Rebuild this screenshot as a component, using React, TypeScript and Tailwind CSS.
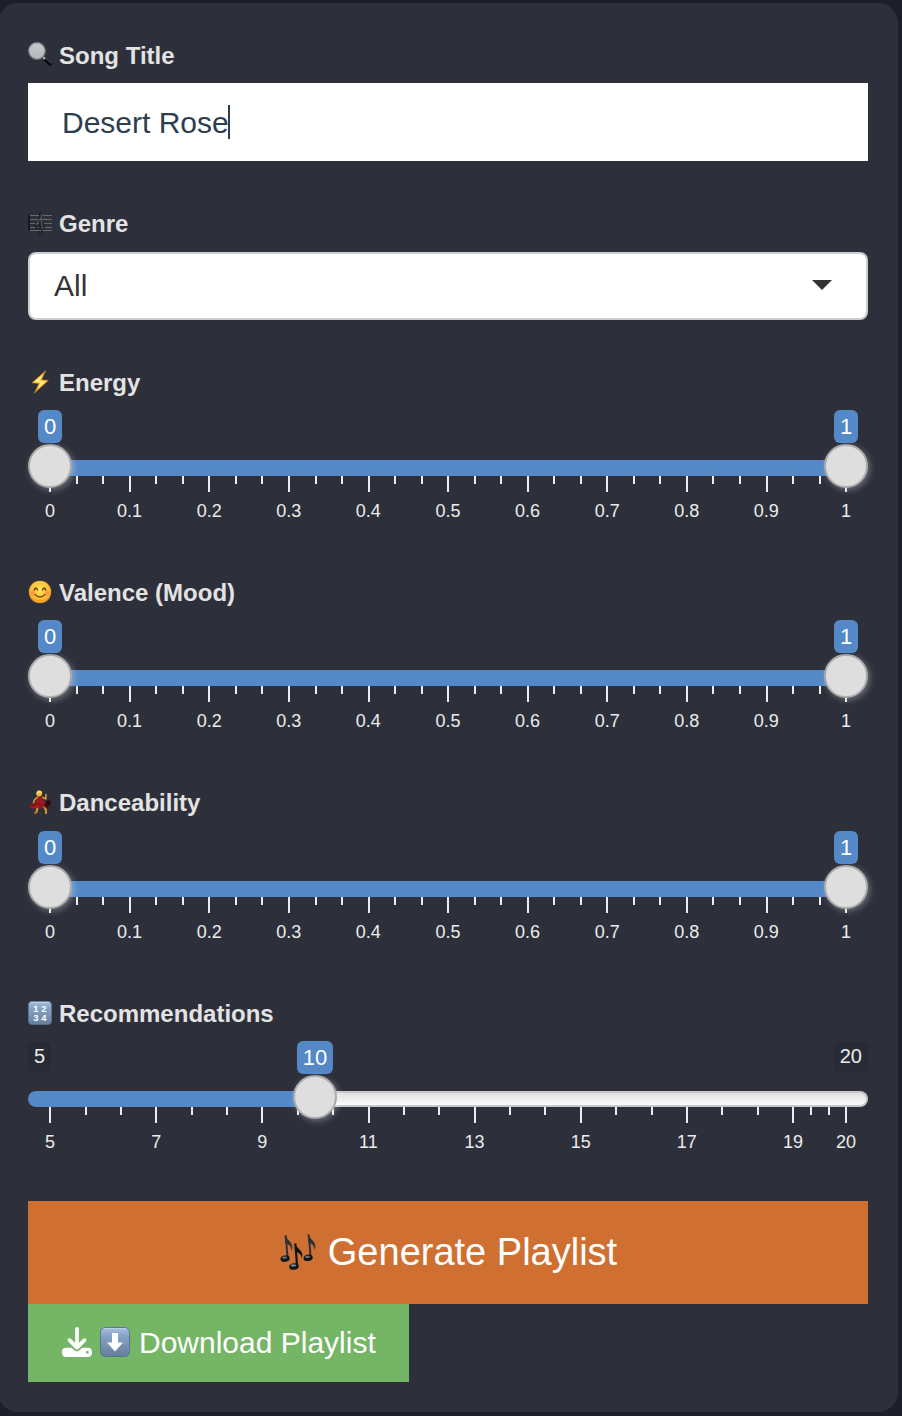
import type { ReactNode } from "react";
import { FaDownload } from "react-icons/fa6";

function SearchEmoji() {
  return (
    <svg viewBox="0 0 24 24" className="size-6">
      <defs>
        <linearGradient id="lens" x1="0" y1="0" x2="0" y2="1">
          <stop offset="0" stopColor="#c8cacd" />
          <stop offset="1" stopColor="#b4b7ba" />
        </linearGradient>
      </defs>
      <path d="M17 17 L22 22" stroke="#08090a" strokeWidth="3.6" strokeLinecap="round" />
      <path d="M17.800 16.200 L22.800 21" stroke="#6d6f72" strokeWidth="0.9" strokeLinecap="round" />
      <path d="M14 14 L17 17" stroke="#c8c9cb" strokeWidth="2" />
      <circle cx="9" cy="9" r="8.400" fill="url(#lens)" stroke="#666a71" strokeWidth="1.300" />
      <path d="M1 9 A8 8 0 0 1 14.6 3.3" fill="none" stroke="#a3a8ae" strokeWidth="0.8" />
    </svg>
  );
}

function ScoreEmoji() {
  return (
    <svg viewBox="0 0 24 24" className="size-6" fill="none">
      <path d="M1 4.500h23M1 8.500h23M1 12.500h23M1 16.500h23M1 19.500h23" stroke="#666970" strokeWidth="1" />
      <path d="M1.100 3.500v16.600" stroke="#121418" strokeWidth="1.600" />
      <path
        d="M14 19.500c.300 2.300-.800 3.500-2.200 3.500-2 0-2.400-2.400-.7-2.300M14 19.500L11.900 6c-.400-3 .6-4.800 1.500-5 1 2 .6 4.300-1.300 6.500-2.400 2.600-4.700 4.200-4.500 7.300.2 3.500 5 4.300 7.600 2.200 2-2 .5-5-2-4.800-2.600.2-3.200 2.800-1.300 4"
        stroke="#222429"
        strokeWidth="1.700"
        strokeLinecap="round"
      />
      <path d="M12.700 7l1.800 11M13.900 2.500q.4 2-1 4.500-4 3.500-4.400 7" stroke="#85888d" strokeWidth="0.600" />
    </svg>
  );
}

function BoltEmoji() {
  return (
    <svg viewBox="0 0 24 24" className="size-6">
      <defs>
        <linearGradient id="bolt" x1="0" y1="0" x2="0" y2="1">
          <stop offset="0" stopColor="#f6a623" />
          <stop offset="0.5" stopColor="#ffd34f" />
          <stop offset="1" stopColor="#f49b19" />
        </linearGradient>
      </defs>
      <path d="M17.800.6 4 12.800l7 .700L6.200 23.300 20.300 10.600l-6.800-.900z" fill="url(#bolt)" stroke="#c77a1b" strokeWidth="0.600" strokeLinejoin="round" />
      <path d="M14.800 4.200 7 11.600l5.800.700L9.500 19l7.500-7.200-5.600-.700z" fill="#fff08c" />
    </svg>
  );
}

function SmileEmoji() {
  return (
    <svg viewBox="0 0 24 24" className="size-6">
      <defs>
        <radialGradient id="face" cx="0.5" cy="0.42" r="0.6">
          <stop offset="0" stopColor="#ffe35b" />
          <stop offset="0.6" stopColor="#fdc63c" />
          <stop offset="1" stopColor="#ed8d1d" />
        </radialGradient>
        <radialGradient id="cheek">
          <stop offset="0" stopColor="#f77f3a" stopOpacity="0.8" />
          <stop offset="1" stopColor="#f77f3a" stopOpacity="0" />
        </radialGradient>
      </defs>
      <circle cx="12" cy="12" r="11.200" fill="url(#face)" />
      <circle cx="5" cy="13" r="4" fill="url(#cheek)" />
      <circle cx="19" cy="13" r="4" fill="url(#cheek)" />
      <path d="M6.200 10q1.600-4 3.200 0M14.600 10q1.600-4 3.200 0" fill="none" stroke="#714009" strokeWidth="1.500" strokeLinecap="round" />
      <path d="M7 14.500q5 5 10 0" fill="none" stroke="#814809" strokeWidth="1.300" strokeLinecap="round" />
    </svg>
  );
}

function DancerEmoji() {
  return (
    <svg viewBox="0 0 24 24" className="size-6" strokeLinecap="round" strokeLinejoin="round">
      <path d="M10 16l-1.500 6M15.500 16l2.500 4v3" stroke="#d99a35" strokeWidth="2" fill="none" />
      <path d="M8 22.600l-1.200.600M18 22.600v.800" stroke="#c98a35" strokeWidth="1.300" />
      <path d="M9.500 6.500l5.300.300.4 4.700 4.800.5 2.500 2-4.400 3.700-3.600-1.200-2.300 2.500-3.400-1.600-3.600 1.400L.8 16.500l1-1.500L7.500 13z" fill="#a2181d" />
      <path d="M18 11q3-2 5 .8.8 2.200-4 6l-2.500-2z" fill="#2f0b10" />
      <path d="M2 15l5 .5 3-2.500 3 2 4-1" stroke="#621018" strokeWidth="0.900" fill="none" />
      <path d="M9.500 7l-3 2.800-1 2.700M14.800 7.300l3 1.700.2-4.500" stroke="#dda03c" strokeWidth="1.500" fill="none" />
      <circle cx="11.300" cy="3.600" r="2.800" fill="#edb43e" />
      <path d="M8.500 5Q8 .500 11.500.6q3 .4 2.500 3.200l-2-1.300z" fill="#ffd75a" />
    </svg>
  );
}

function TileDefs({ id }: { id: string }) {
  return (
    <defs>
      <linearGradient id={id} x1="0" y1="0" x2="0" y2="1">
        <stop offset="0" stopColor="#a5bfdf" />
        <stop offset="0.3" stopColor="#86a3c4" />
        <stop offset="1" stopColor="#667e9c" />
      </linearGradient>
    </defs>
  );
}

function NumbersEmoji() {
  return (
    <svg viewBox="0 0 24 24" className="size-6">
      <TileDefs id="numbers-tile" />
      <rect x="0.400" y="0.400" width="23.200" height="23.200" rx="4" fill="url(#numbers-tile)" stroke="#5e7796" strokeWidth="0.700" />
      <path d="M3 1.400h18" stroke="#c8dbf1" strokeWidth="0.800" strokeLinecap="round" />
      <g fill="#fff" fontFamily="Liberation Sans, sans-serif" fontWeight="700" fontSize="9.500" textAnchor="middle">
        <text x="8" y="10.500">1</text>
        <text x="16" y="10.500">2</text>
        <text x="8" y="19.700">3</text>
        <text x="16" y="19.700">4</text>
      </g>
    </svg>
  );
}

function DownArrowEmoji() {
  return (
    <svg viewBox="0 0 30 30" className="size-[30px]">
      <TileDefs id="arrow-tile" />
      <rect x="0.500" y="0.500" width="29" height="29" rx="5" fill="url(#arrow-tile)" stroke="#556f91" strokeWidth="0.900" />
      <path d="M4 1.600h22" stroke="#bdd3ee" strokeWidth="0.900" strokeLinecap="round" />
      <path d="M12 6h6v9.500h5L15 24.500 7 15.500h5z" fill="#fff" />
    </svg>
  );
}

function Note({ x, y }: { x: number; y: number }) {
  return (
    <g transform={`translate(${x} ${y})`}>
      <path d="M4.500 0.500C5.500 5 14 8 11 15.500c0-4.500-3-6-5.600-7.300z" fill="#2b3034" stroke="#43403d" strokeWidth="0.600" />
      <path d="M5.200 0.500L7.200 23.500" stroke="#2b3033" strokeWidth="1.900" />
      <ellipse cx="4.600" cy="23.800" rx="4.600" ry="3.200" fill="#111619" transform="rotate(-8 4.600 23.800)" />
      <ellipse cx="4" cy="22.900" rx="2.600" ry="1.100" fill="#65717a" />
    </g>
  );
}

function NotesEmoji() {
  return (
    <svg viewBox="0 0 38 38" className="size-[38px]">
      <Note x={1.5} y={0.8} />
      <Note x={24.500} y={0} />
      <g transform="translate(10 9)">
        <path d="M5.800 0.500C6.500 5 16 7.500 12.700 15.500c0-4.500-3.500-6-6.400-7.300z" fill="#0d1012" />
        <path d="M6.300 0.500L8.100 23" stroke="#111416" strokeWidth="2.200" />
        <ellipse cx="5" cy="23.500" rx="4.800" ry="3.300" fill="#111619" transform="rotate(-6 5 23.500)" />
        <ellipse cx="4.300" cy="22.400" rx="2.800" ry="1.200" fill="#7a858c" />
      </g>
    </svg>
  );
}

function Label({ icon, children }: { icon: ReactNode; children: ReactNode }) {
  return (
    <div className="flex h-6 items-center gap-[7px] text-[24px] leading-6 font-bold text-[#e3e3e3]">
      {icon}
      <span className="relative top-px">{children}</span>
    </div>
  );
}

function Ticks({ segments, className }: { segments: number; className: string }) {
  const count = segments * 3 + 1;
  return (
    <div className={`flex items-start justify-between ${className}`}>
      {Array.from({ length: count }, (_, i) => (
        <i key={i} className={i % 3 === 0 ? "h-4 w-0.5 bg-[#ececec]" : "h-2 w-0.5 bg-[#ececec]"} />
      ))}
    </div>
  );
}

function Numbers({ values, className }: { values: string[]; className: string }) {
  return (
    <div className={`flex justify-between ${className}`}>
      {values.map((v) => (
        <span key={v} className="flex w-0 justify-center whitespace-nowrap">
          {v}
        </span>
      ))}
    </div>
  );
}

function Handle({ value, className }: { value: string; className: string }) {
  return (
    <div className={`absolute top-0 flex w-11 flex-col items-center ${className}`}>
      <span className="flex h-[33px] items-center rounded-[6px] bg-[#5488c7] px-1.5 text-[22px] leading-none text-white">
        {value}
      </span>
      <span className="mt-px size-11 rounded-full border-2 border-[#ababab] bg-[#dedede] shadow-[2px_2px_6px_rgba(255,255,255,0.3)]" />
    </div>
  );
}

const tenths = ["0", "0.1", "0.2", "0.3", "0.4", "0.5", "0.6", "0.7", "0.8", "0.9", "1"];

function RangeSlider() {
  return (
    <div className="relative mt-4 h-[110px] pt-[50px] text-[18px] leading-5 text-[#ececec]">
      <div className="mx-[21px] h-4 bg-[#5488c7]" />
      <Ticks segments={10} className="mr-[20.5px] ml-[21.200px] h-4" />
      <Numbers values={tenths} className="mx-[22px] mt-[9px]" />
      <Handle value="0" className="left-0" />
      <Handle value="1" className="right-0" />
    </div>
  );
}

function CountSlider() {
  return (
    <div className="relative mt-4 h-[110px] pt-[50px] text-[18px] leading-5 text-[#ececec]">
      <div className="flex h-4">
        <div className="w-[287px] rounded-l-[8px] bg-[#5488c7]" />
        <div className="grow rounded-r-[8px] border-2 border-l-0 border-[#c8c8c8] bg-linear-to-b from-[#e0e0e0] to-[#fbfbfb]" />
      </div>
      <div className="mr-[21px] ml-[21.200px] flex h-4">
        <Ticks segments={7} className="w-[745px]" />
        <div className="ml-4 flex grow items-start justify-between">
          <i className="h-2 w-0.5 bg-[#ececec]" />
          <i className="h-2 w-0.5 bg-[#ececec]" />
          <i className="h-4 w-0.5 bg-[#ececec]" />
        </div>
      </div>
      <div className="mx-[22px] mt-[9px] flex justify-between">
        <Numbers values={["5", "7", "9", "11", "13", "15", "17", "19"]} className="w-[743px]" />
        <span className="flex w-0 justify-center">20</span>
      </div>
      <span className="absolute top-0 left-0 flex h-[31px] items-center rounded-[6px] bg-black/10 px-1.5 pb-0.5 text-[20px]">5</span>
      <span className="absolute top-0 right-0 flex h-[31px] items-center rounded-[6px] bg-black/10 px-1.5 pb-0.5 text-[20px]">20</span>
      <Handle value="10" className="left-[265px]" />
    </div>
  );
}

export default function App() {
  return (
    <main className="h-[1416px] w-[902px] overflow-hidden bg-[#1c1f27] pt-[3px] font-['Liberation_Sans',Arial,sans-serif]">
      <form className="-ml-0.5 flex h-[1409px] w-[900px] flex-col rounded-[20px] bg-[#2d303b] pt-10 pr-[30px] pl-[30px]">
        <div className="-mt-px mb-px">
          <Label icon={<SearchEmoji />}>
            <span className="relative top-px">Song Title</span>
          </Label>
        </div>
        <div className="mt-4 flex h-[78px] items-center bg-white px-[34px] text-[30px] text-[#2c3e50]">
          <span>Desert Rose</span>
          <i className="-ml-px h-[34px] w-0.5 bg-[#2c3e50]" />
        </div>

        <div className="mt-[50px]">
          <Label icon={<ScoreEmoji />}>Genre</Label>
        </div>
        <div className="mt-[17px] flex h-[68px] items-center justify-between rounded-[8px] border-2 border-[#cccccc] bg-white pr-[34px] pl-6 text-[30px] text-[#333333]">
          <span className="-mt-0.5">All</span>
          <svg viewBox="0 0 20 10" className="-mt-0.5 h-2.5 w-5 fill-[#333333]">
            <path d="M0 0h20L10 10z" />
          </svg>
        </div>

        <div className="mt-[50px]">
          <Label icon={<BoltEmoji />}>Energy</Label>
          <RangeSlider />
        </div>
        <div className="mt-[60px]">
          <Label icon={<SmileEmoji />}>Valence (Mood)</Label>
          <RangeSlider />
        </div>
        <div className="mt-[60px]">
          <div className="mb-[17px]">
            <Label icon={<DancerEmoji />}>Danceability</Label>
          </div>
          <RangeSlider />
        </div>
        <div className="mt-[60px]">
          <Label icon={<NumbersEmoji />}>Recommendations</Label>
          <CountSlider />
        </div>

        <button type="button" className="mt-[50px] flex h-[103px] shrink-0 items-center justify-center gap-[11px] bg-[#cf7032] text-[38px] text-white">
          <NotesEmoji />
          <span>Generate Playlist</span>
        </button>
        <button type="button" className="flex h-[78px] w-[381px] shrink-0 items-center gap-2 bg-[#75b566] pb-0.5 pl-[34px] text-[30px] whitespace-nowrap text-white">
          <FaDownload className="size-[30px]" />
          <DownArrowEmoji />
          <span className="ml-px">Download Playlist</span>
        </button>
      </form>
    </main>
  );
}
